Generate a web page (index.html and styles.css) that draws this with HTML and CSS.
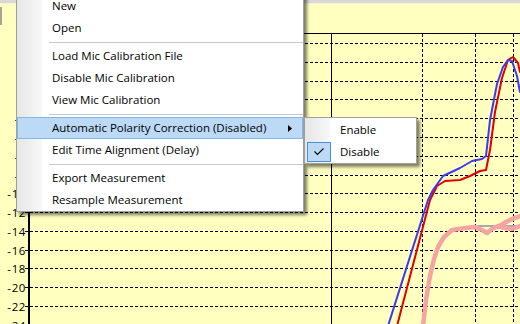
FILE: index.html
```html
<!DOCTYPE html>
<html>
    <head>
        <title>Measurement menu</title>
        <link rel="stylesheet" href="styles.css">
    </head>
    <body>
        <div class="screen">
            <svg class="chart" width="520" height="324" viewBox="0 0 520 324">
                <rect x="0" y="0" width="520" height="324" fill="#ffffc0"/>
                <rect x="0" y="0" width="520" height="3" fill="#d9d9d2"/>
                <rect x="0" y="3" width="520" height="1" fill="#f2f2e6"/>
                <rect x="0" y="7" width="2" height="18" fill="#a4a498"/>

                <!-- horizontal grid -->
                <g class="grid">
                    <line x1="25" y1="43.5" x2="520" y2="43.5"/>
                    <line x1="25" y1="62.5" x2="520" y2="62.5"/>
                    <line x1="25" y1="81.5" x2="520" y2="81.5"/>
                    <line x1="25" y1="99.5" x2="520" y2="99.5"/>
                    <line x1="25" y1="118.5" x2="520" y2="118.5"/>
                    <line x1="25" y1="137.5" x2="520" y2="137.5"/>
                    <line x1="25" y1="156.5" x2="520" y2="156.5"/>
                    <line x1="25" y1="175.5" x2="520" y2="175.5"/>
                    <line x1="25" y1="193.5" x2="520" y2="193.5"/>
                    <line x1="25" y1="212.5" x2="520" y2="212.5"/>
                    <line x1="25" y1="231.5" x2="520" y2="231.5"/>
                    <line x1="25" y1="250.5" x2="520" y2="250.5"/>
                    <line x1="25" y1="268.5" x2="520" y2="268.5"/>
                    <line x1="25" y1="287.5" x2="520" y2="287.5"/>
                    <line x1="25" y1="306.5" x2="520" y2="306.5"/>
                    <!-- vertical grid -->
                    <line x1="422.5" y1="34" x2="422.5" y2="324"/>
                    <line x1="475.5" y1="34" x2="475.5" y2="324"/>
                    <line x1="513.5" y1="34" x2="513.5" y2="324"/>
                </g>
                <line class="axis" x1="28" y1="33.5" x2="520" y2="33.5"/>
                <line class="axis" x1="331.5" y1="33" x2="331.5" y2="324"/>
                <line class="axis-thick" x1="29" y1="33" x2="29" y2="324"/>

                <g class="labels">
                    <text x="26" y="43.5">6</text>
                    <text x="26" y="62.5">4</text>
                    <text x="26" y="81.5">2</text>
                    <text x="26" y="99.5">0</text>
                    <text x="26" y="118.5">-2</text>
                    <text x="26" y="137.5">-4</text>
                    <text x="26" y="156.5">-6</text>
                    <text x="26" y="175.5">-8</text>
                    <text x="26" y="193.5">-10</text>
                    <text x="26" y="212.5">-12</text>
                    <text x="26" y="231.5">-14</text>
                    <text x="26" y="250.5">-16</text>
                    <text x="26" y="268.5">-18</text>
                    <text x="26" y="287.5">-20</text>
                    <text x="26" y="306.5">-22</text>
                    <text x="26" y="325.5">-24</text>
                </g>

                <!-- curves -->
                <polyline class="trace-grey" points="478,226 520,226"/>
                <polyline class="trace-pink" points="423,326 426,300 430,276 434,259 438,247 444,237 452,230 465,228 475,227 482,230 487,233 492,229 498,226 505,228 512,229 520,226"/>
                <polyline class="trace-pink" points="498,227 506,222 512,219 520,216"/>
                <polyline class="trace-red" points="397,326 430,200 437,186 445,181 460,180 470,176 480,171 486,170 490,150 495,112 502,78 508,60 513,57 518,63 520,72"/>
                <polyline class="trace-blue" points="388,326 428,200 433,190 443,176 460,168 472,161 482,159 486,156 490,120 497,84 503,67 508,60 512,61 517,76 520,92"/>
            </svg>

            <div class="menu main-menu">
                <div class="menu-item">New</div>
                <div class="menu-item">Open</div>
                <div class="menu-sep"></div>
                <div class="menu-item">Load Mic Calibration File</div>
                <div class="menu-item">Disable Mic Calibration</div>
                <div class="menu-item">View Mic Calibration</div>
                <div class="menu-sep"></div>
                <div class="menu-item hot">
                    Automatic Polarity Correction (Disabled)
                    <svg class="arrow" width="4" height="7" viewBox="0 0 4 7"><polygon points="0,0 4,3.5 0,7" fill="#000"/></svg>
                </div>
                <div class="menu-item">Edit Time Alignment (Delay)</div>
                <div class="menu-sep"></div>
                <div class="menu-item">Export Measurement</div>
                <div class="menu-item">Resample Measurement</div>
            </div>

            <div class="menu sub-menu">
                <div class="menu-item">Enable</div>
                <div class="menu-item">
                    <span class="check">
                        <svg width="12" height="10" viewBox="0 0 12 10"><polyline points="1.5,4.5 4.5,7.5 10.5,1.5" fill="none" stroke="#000" stroke-width="1.2"/></svg>
                    </span>
                    Disable
                </div>
            </div>
        </div>
    </body>
</html>
```

FILE: styles.css
```css
body{
    margin: 0;
    overflow: hidden;
}

.screen{
    position: relative;
    width: 520px;
    height: 324px;
    overflow: hidden;
    font-family: "Open Sans", "Noto Sans", sans-serif;
}

.chart{
    display: block;
}

.grid line{
    stroke: #000;
    stroke-width: 1;
    stroke-dasharray: 3 2;
}

.axis{
    stroke: #000;
    stroke-width: 1;
}

.axis-thick{
    stroke: #000;
    stroke-width: 2;
}

.labels text{
    font-family: "Open Sans", sans-serif;
    font-size: 11.5px;
    letter-spacing: 0.6px;
    text-anchor: end;
    dominant-baseline: central;
    fill: #000;
}

.trace-grey, .trace-pink, .trace-red, .trace-blue{
    fill: none;
    stroke-linejoin: round;
    stroke-linecap: round;
}

.trace-grey{
    stroke: #a9a9a9;
    stroke-width: 2;
}

.trace-pink{
    stroke: #f5a3a3;
    stroke-width: 4.5;
}

.trace-red{
    stroke: #e00000;
    stroke-width: 2;
}

.trace-blue{
    stroke: #3a3af0;
    stroke-width: 2;
}

.menu{
    position: absolute;
    background: #fff;
    border: 1px solid #a0a0a0;
    box-shadow: 3px 3px 3px rgba(0, 0, 0, 0.5);
    font-size: 11.5px;
    color: #000;
}

.menu::before{
    content: "";
    position: absolute;
    left: 0;
    top: 0;
    bottom: 0;
    width: 25px;
    background: linear-gradient(to right, #e6e6e6, #f8f8f8);
}

.main-menu{
    left: 16px;
    top: -7px;
    width: 286px;
    padding: 1px 0 0 0;
}

.sub-menu{
    left: 304px;
    top: 117px;
    width: 111px;
    padding: 1px 0 0 0;
}

.menu-item{
    position: relative;
    height: 22px;
    line-height: 22px;
    padding-left: 35px;
    white-space: nowrap;
    box-sizing: border-box;
}

.menu-item.hot{
    background: #bcd9f6;
    border: 1px solid #84b6e6;
    padding-left: 34px;
    line-height: 20px;
}

.arrow{
    position: absolute;
    right: 10px;
    top: 7px;
}

.menu-sep{
    position: relative;
    height: 6px;
}

.menu-sep::after{
    content: "";
    position: absolute;
    left: 32px;
    right: 0;
    top: 3px;
    height: 1px;
    background: #c8c8c8;
}

.check{
    position: absolute;
    left: 2px;
    top: 1px;
    width: 22px;
    height: 18px;
    background: #bcd9f6;
    border: 1px solid #4b8fd4;
    display: flex;
    align-items: center;
    justify-content: center;
}
```
